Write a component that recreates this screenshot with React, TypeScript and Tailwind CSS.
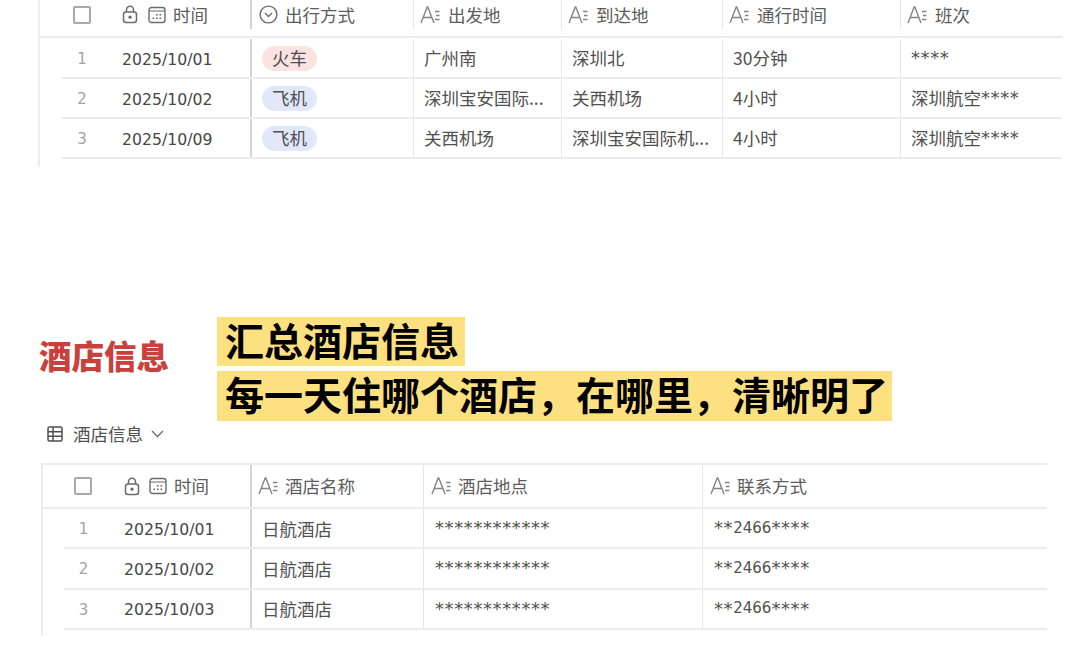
import React from "react";

const Lock = () => (
  <svg width="16" height="19" viewBox="0 0 16 19" fill="none" stroke="#6b6b6b" strokeWidth="1.5">
    <rect x="1.5" y="7" width="13" height="10.5" rx="2.5" />
    <path d="M4.5 7V4.8a3.5 3.5 0 0 1 7 0V7" />
    <circle cx="8" cy="12.2" r="1.6" fill="#6b6b6b" stroke="none" />
  </svg>
);

const Calendar = () => (
  <svg width="18" height="18" viewBox="0 0 18 18" fill="none" stroke="#6b6b6b" strokeWidth="1.4">
    <rect x="1" y="1.5" width="16" height="15" rx="2.5" />
    <path d="M1 5h16" strokeWidth="1" />
    <g fill="#6b6b6b" stroke="none">
      <rect x="8" y="8" width="1.6" height="1.6" />
      <rect x="11.5" y="8" width="1.6" height="1.6" />
      <rect x="4.5" y="11.5" width="1.6" height="1.6" />
      <rect x="8" y="11.5" width="1.6" height="1.6" />
      <rect x="11.5" y="11.5" width="1.6" height="1.6" />
    </g>
  </svg>
);

const SelectIcon = () => (
  <svg width="19" height="19" viewBox="0 0 19 19" fill="none" stroke="#6b6b6b" strokeWidth="1.4">
    <circle cx="9.5" cy="9.5" r="8.4" />
    <path d="M6 8l3.5 3.5L13 8" />
  </svg>
);

const TextIcon = () => (
  <svg width="20" height="18" viewBox="0 0 20 18" fill="none" stroke="#858585" strokeWidth="1.4">
    <path d="M1 17L7.2 1h.6L14 17M3.4 11.5h8.2" />
    <path d="M15 5.5h4.5M16 9.5h3.5M15 13.5h4.5" strokeWidth="1.3" />
  </svg>
);

const Checkbox = () => <div className="h-[18px] w-[18px] shrink-0 rounded-[2px] border-2 border-[#a8a8a8]" />;

function TimeHeader({ box, lock, cal, text }: { box: string; lock: string; cal: string; text: string }) {
  return (
    <div className="flex items-center">
      <div className={box}><Checkbox /></div>
      <div className={lock}><Lock /></div>
      <div className={cal}><Calendar /></div>
      <span className={text}>时间</span>
    </div>
  );
}

function Head({ cls, label, icon }: { cls: string; label: string; icon?: React.ReactNode }) {
  return (
    <div className={`${cls} flex h-full shrink-0 items-center`}>
      {icon ?? <TextIcon />}
      <span>{label}</span>
    </div>
  );
}

function Cell({ w, children, pad = "pl-[10px]" }: { w: string; children: React.ReactNode; pad?: string }) {
  return (
    <div className={`${w} ${pad} flex h-full shrink-0 items-center overflow-hidden whitespace-nowrap border-l border-[#e6e6e6]`}>
      {children}
    </div>
  );
}

function Index({ n, w }: { n: number; w: string }) {
  return <div className={`${w} shrink-0 pt-[3px] text-center font-['DejaVu_Sans'] text-[15px] text-[#a3a3a3]`}>{n}</div>;
}

function DateText({ v, w }: { v: string; w: string }) {
  return (
    <div className={`${w} flex h-full shrink-0 items-center border-r-2 border-[#d4d4d4] pt-[3px] font-['DejaVu_Sans'] text-[15.7px] text-[#464646]`}>
      {v}
    </div>
  );
}

const Tag = ({ t, tone }: { t: string; tone: string }) => (
  <span className={`${tone} ml-[10px] flex h-[25px] w-[55px] items-center justify-center rounded-full`}>{t}</span>
);

const Stars = ({ children }: { children: React.ReactNode }) => (
  <span className="font-['DejaVu_Sans'] text-[18px] tracking-[0.6px]">{children}</span>
);

const Phone = () => (
  <>
    <Stars>**</Stars>
    <span className="font-['DejaVu_Sans'] text-[15px]">2466</span>
    <Stars>****</Stars>
  </>
);

const flight = [
  { n: 1, d: "2025/10/01", t: "火车", tone: "bg-[#fbe3e1]", a: "广州南", b: "深圳北", c: "30分钟", e: <Stars>****</Stars> },
  { n: 2, d: "2025/10/02", t: "飞机", tone: "bg-[#e1e8fa]", a: "深圳宝安国际...", b: "关西机场", c: "4小时", e: <>深圳航空<Stars>****</Stars></> },
  { n: 3, d: "2025/10/09", t: "飞机", tone: "bg-[#e1e8fa]", a: "关西机场", b: "深圳宝安国际机...", c: "4小时", e: <>深圳航空<Stars>****</Stars></> },
];

const hotels = [
  { n: 1, d: "2025/10/01" },
  { n: 2, d: "2025/10/02" },
  { n: 3, d: "2025/10/03" },
];

const topHead = "border-l border-[#e6e6e6] pl-[6px] gap-[8px]";
const hotelHead = "border-l border-[#e6e6e6] pl-[7px] gap-[7px]";

export default function App() {
  return (
    <div className="h-[669px] w-[1080px] overflow-hidden bg-white font-['Noto_Sans_CJK_SC',sans-serif] text-[17.5px] leading-none text-[#505050]">
      {/* transport table */}
      <section className="ml-[38px] w-[1024px] border-l-2 border-[#ececec] pb-[8px]">
        <div className="flex h-[38px] items-stretch border-b-2 border-[#ececec] pb-[7px] text-[#5c5c5c]">
          <div className="flex w-[212px] shrink-0 items-center border-r-2 border-[#d4d4d4]">
            <TimeHeader box="ml-[33px]" lock="ml-[31px]" cal="ml-[10px]" text="ml-[7px]" />
          </div>
          <Head cls="w-[161px] pl-[7px] gap-[7px]" label="出行方式" icon={<SelectIcon />} />
          <Head cls={`w-[148px] ${topHead}`} label="出发地" />
          <Head cls={`w-[161px] ${topHead}`} label="到达地" />
          <Head cls={`w-[178px] ${topHead}`} label="通行时间" />
          <Head cls={`w-[162px] ${topHead}`} label="班次" />
        </div>
        <div className="pt-[1px]">
          {flight.map((r) => (
            <div key={r.n} className="ml-[22px] flex h-[40px] items-center border-b-2 border-[#ececec]">
              <Index n={r.n} w="w-[40px]" />
              <div className="w-[20px] shrink-0" />
              <DateText v={r.d} w="w-[130px]" />
              <div className="flex h-full w-[161px] shrink-0 items-center"><Tag t={r.t} tone={r.tone} /></div>
              <Cell w="w-[148px]">{r.a}</Cell>
              <Cell w="w-[161px]">{r.b}</Cell>
              <Cell w="w-[178px]">{r.c}</Cell>
              <Cell w="w-[162px]">{r.e}</Cell>
            </div>
          ))}
        </div>
      </section>

      {/* heading */}
      <div className="mt-[150px] flex items-start">
        <h2 className="ml-[39px] mt-[19px] w-[178px] text-[32.5px] font-black leading-[38px] text-[#c9403d]">酒店信息</h2>
        <div className="flex flex-col items-start gap-[5px] text-[39px] font-bold leading-[45px] text-black">
          <div className="h-[49px] bg-[#fde07f] pl-[8px] pr-[6px]">汇总酒店信息</div>
          <div className="h-[50px] bg-[#fde07f] pl-[8px] pr-[4px]">每一天住哪个酒店，在哪里，清晰明了</div>
        </div>
      </div>

      {/* view label */}
      <div className="ml-[47px] mt-[3px] flex h-[20px] items-center">
        <svg width="16" height="16" viewBox="0 0 16 16" fill="none" stroke="#505050" strokeWidth="1.5">
          <rect x="1" y="1" width="14" height="14" rx="1.5" />
          <path d="M1 5.7h14M1 10.3h14M6 1v14" />
        </svg>
        <span className="ml-[10px]">酒店信息</span>
        <svg className="ml-[8px]" width="13" height="8" viewBox="0 0 13 8" fill="none" stroke="#6b6b6b" strokeWidth="1.3">
          <path d="M1 1l5.5 5.5L12 1" />
        </svg>
      </div>

      {/* hotel table */}
      <section className="ml-[41px] mt-[19px] w-[1006px] border-l-2 border-[#ececec] pb-[6px]">
        <div className="flex h-[46px] items-stretch border-y-2 border-[#ececec] text-[#5c5c5c]">
          <div className="flex w-[209px] shrink-0 items-center border-r-2 border-[#d4d4d4]">
            <TimeHeader box="ml-[31px]" lock="ml-[32px]" cal="ml-[9px]" text="ml-[7px]" />
          </div>
          <Head cls="w-[171px] pl-[6px] gap-[7px]" label="酒店名称" />
          <Head cls={`w-[279px] ${hotelHead}`} label="酒店地点" />
          <Head cls={`w-[345px] ${hotelHead}`} label="联系方式" />
        </div>
        {hotels.map((r) => (
          <div key={r.n} className="ml-[21px] flex h-[40.3px] items-center border-b-2 border-[#ececec]">
            <Index n={r.n} w="w-[39px]" />
            <div className="w-[21px] shrink-0" />
            <DateText v={r.d} w="w-[128px]" />
            <div className="flex h-full w-[171px] shrink-0 items-center pl-[10px] pt-[1px]">日航酒店</div>
            <Cell w="w-[279px]" pad="pl-[11px]"><Stars>************</Stars></Cell>
            <Cell w="w-[345px]" pad="pl-[11px]"><Phone /></Cell>
          </div>
        ))}
      </section>
    </div>
  );
}
